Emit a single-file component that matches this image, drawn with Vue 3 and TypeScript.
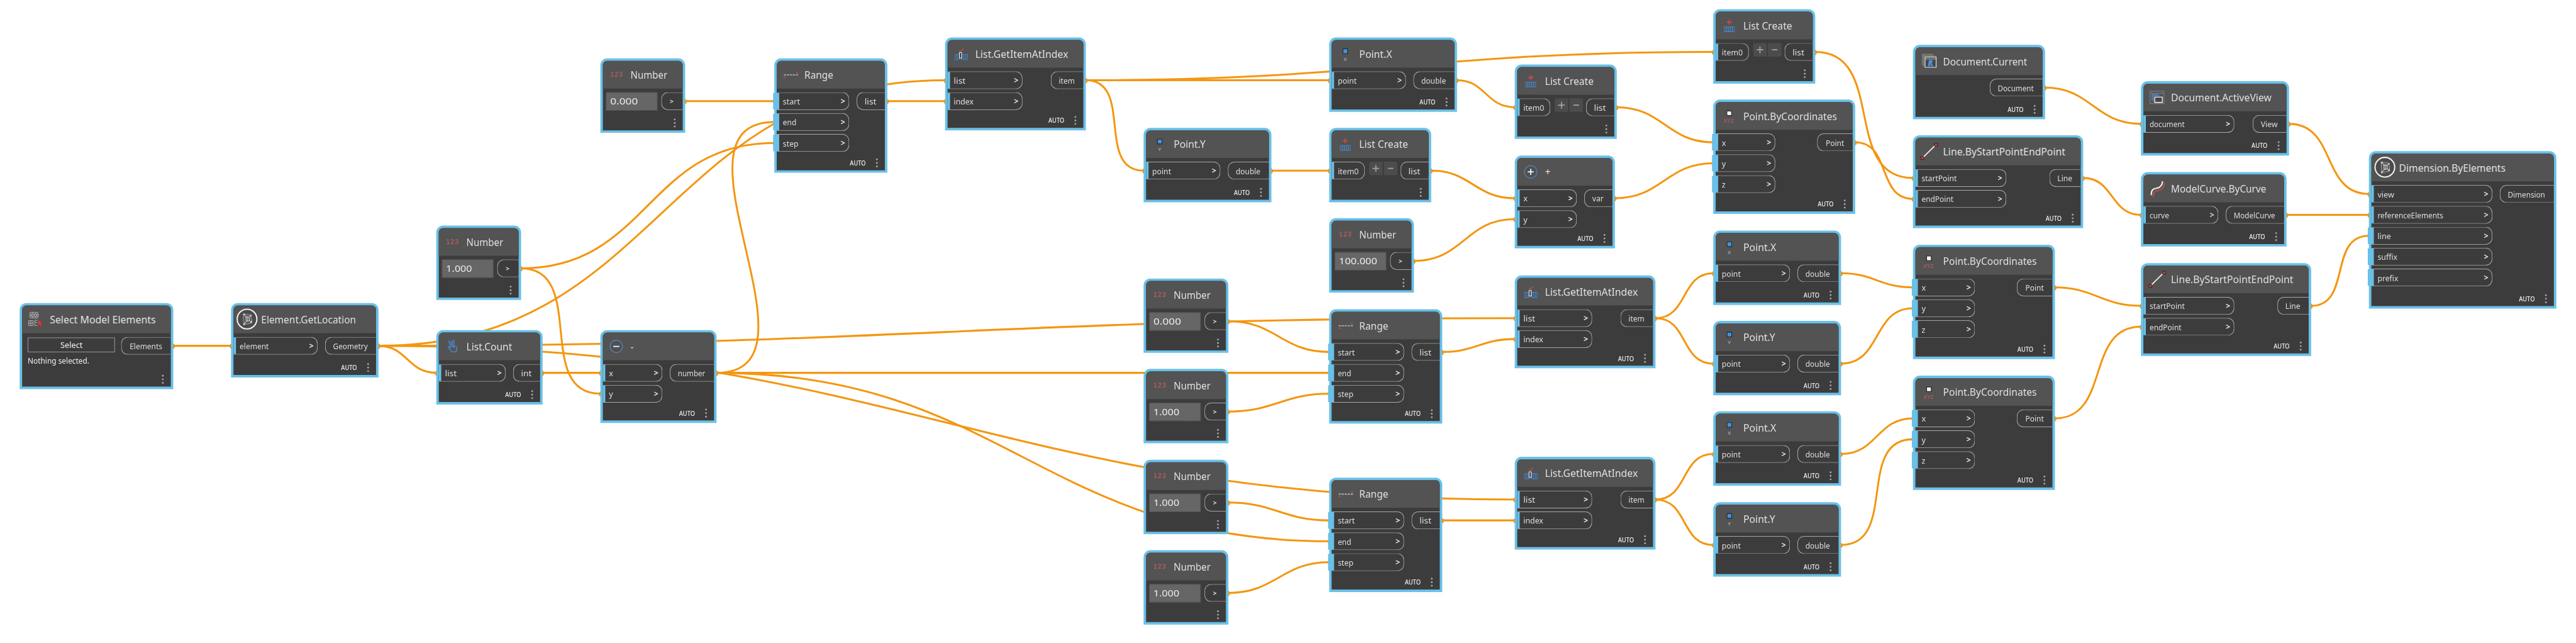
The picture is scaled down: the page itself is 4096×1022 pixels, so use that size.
<script setup lang="ts">
import type { Directive } from 'vue'

interface GraphNode {
  id: string
  title: string
  icon: string
  x: number
  y: number
  w: number
  h: number
  inputs: string[]
  inEnd: number
  output: string
  outStart: number
  auto: boolean
  value?: string
  wideFrom?: number
}

const SCALE = 4096 / 4192
const PORT_Y = 69.5
const PORT_STEP = 34

type Kind = Omit<GraphNode, 'id' | 'x' | 'y'>

const kinds: Record<string, Kind> = {
  select: { title: 'Select Model Elements', icon: 'select', w: 250, h: 140, inputs: [], inEnd: 0, output: 'Elements', outStart: 165, auto: false },
  location: { title: 'Element.GetLocation', icon: 'package', w: 240, h: 121, inputs: ['element'], inEnd: 141, output: 'Geometry', outStart: 153, auto: true },
  number: { title: 'Number', icon: 'number', w: 138, h: 121, inputs: [], inEnd: 0, output: '>', outStart: 99, auto: false },
  count: { title: 'List.Count', icon: 'count', w: 173, h: 121, inputs: ['list'], inEnd: 113, output: 'int', outStart: 125, auto: true },
  minus: { title: '-', icon: 'minus', w: 189, h: 151, inputs: ['x', 'y'], inEnd: 101, output: 'number', outStart: 113, auto: true },
  plus: { title: '+', icon: 'plus', w: 163, h: 151, inputs: ['x', 'y'], inEnd: 101, output: 'var', outStart: 113, auto: true },
  range: { title: 'Range', icon: 'range', w: 184, h: 186, inputs: ['start', 'end', 'step'], inEnd: 122, output: 'list', outStart: 134, auto: true, wideFrom: 0 },
  getItem: { title: 'List.GetItemAtIndex', icon: 'getItem', w: 229, h: 151, inputs: ['list', 'index'], inEnd: 126, output: 'item', outStart: 172, auto: true },
  pointX: { title: 'Point.X', icon: 'pointX', w: 208, h: 121, inputs: ['point'], inEnd: 125, output: 'double', outStart: 137, auto: true },
  pointY: { title: 'Point.Y', icon: 'pointY', w: 208, h: 121, inputs: ['point'], inEnd: 125, output: 'double', outStart: 137, auto: true },
  listCreate: { title: 'List Create', icon: 'listCreate', w: 166, h: 121, inputs: ['item0'], inEnd: 58, output: 'list', outStart: 116, auto: false },
  byCoords: { title: 'Point.ByCoordinates', icon: 'byCoords', w: 231, h: 186, inputs: ['x', 'y', 'z'], inEnd: 101, output: 'Point', outStart: 169, auto: true, wideFrom: 0 },
  docCurrent: { title: 'Document.Current', icon: 'docCurrent', w: 215, h: 121, inputs: [], inEnd: 0, output: 'Document', outStart: 125, auto: true },
  activeView: { title: 'Document.ActiveView', icon: 'activeView', w: 241, h: 121, inputs: ['document'], inEnd: 152, output: 'View', outStart: 182, auto: true },
  line: { title: 'Line.ByStartPointEndPoint', icon: 'line', w: 277, h: 151, inputs: ['startPoint', 'endPoint'], inEnd: 152, output: 'Line', outStart: 222, auto: true },
  modelCurve: { title: 'ModelCurve.ByCurve', icon: 'modelCurve', w: 237, h: 121, inputs: ['curve'], inEnd: 126, output: 'ModelCurve', outStart: 138, auto: true },
  dimension: { title: 'Dimension.ByElements', icon: 'package', w: 305, h: 256, inputs: ['view', 'referenceElements', 'line', 'suffix', 'prefix'], inEnd: 201, output: 'Dimension', outStart: 213, auto: true, wideFrom: 2 },
}

function place(id: string, kind: string, x: number, y: number, value?: string): GraphNode {
  return { id, x, y, value, ...kinds[kind] }
}

const nodes: GraphNode[] = [
  place('sel', 'select', 32, 493),
  place('loc', 'location', 376, 493),
  place('n1', 'number', 710, 367, '1.000'),
  place('cnt', 'count', 710, 537),
  place('sub', 'minus', 977, 537),
  place('n0', 'number', 977, 95, '0.000'),
  place('rng', 'range', 1260, 95),
  place('get', 'getItem', 1538, 61),
  place('py', 'pointY', 1861, 208),
  place('px', 'pointX', 2163, 61),
  place('lcY', 'listCreate', 2163, 208),
  place('n100', 'number', 2163, 355, '100.000'),
  place('m0', 'number', 1861, 453, '0.000'),
  place('m1', 'number', 1861, 600, '1.000'),
  place('k1', 'number', 1861, 748, '1.000'),
  place('k2', 'number', 1861, 895, '1.000'),
  place('rngB', 'range', 2163, 503),
  place('rngC', 'range', 2163, 777),
  place('lcX', 'listCreate', 2465, 105),
  place('add', 'plus', 2465, 253),
  place('getB', 'getItem', 2465, 448),
  place('getC', 'getItem', 2465, 743),
  place('lcTop', 'listCreate', 2788, 15),
  place('pbc', 'byCoords', 2788, 162),
  place('pxB', 'pointX', 2788, 375),
  place('pyB', 'pointY', 2788, 522),
  place('pxC', 'pointX', 2788, 669),
  place('pyC', 'pointY', 2788, 817),
  place('doc', 'docCurrent', 3113, 73),
  place('lineA', 'line', 3113, 220),
  place('pbcB', 'byCoords', 3113, 398),
  place('pbcC', 'byCoords', 3113, 611),
  place('view', 'activeView', 3484, 132),
  place('curve', 'modelCurve', 3484, 280),
  place('lineB', 'line', 3484, 428),
  place('dim', 'dimension', 3855, 246),
]

const links: [string, string, number][] = [
  ['sel', 'loc', 0],
  ['loc', 'cnt', 0],
  ['loc', 'get', 0],
  ['loc', 'getB', 0],
  ['loc', 'getC', 0],
  ['cnt', 'sub', 0],
  ['n1', 'sub', 1],
  ['n1', 'rng', 2],
  ['sub', 'rng', 1],
  ['sub', 'rngB', 1],
  ['sub', 'rngC', 1],
  ['n0', 'rng', 0],
  ['rng', 'get', 1],
  ['get', 'lcTop', 0],
  ['get', 'px', 0],
  ['get', 'py', 0],
  ['px', 'lcX', 0],
  ['py', 'lcY', 0],
  ['lcY', 'add', 0],
  ['n100', 'add', 1],
  ['lcX', 'pbc', 0],
  ['add', 'pbc', 1],
  ['lcTop', 'lineA', 0],
  ['pbc', 'lineA', 1],
  ['m0', 'rngB', 0],
  ['m1', 'rngB', 2],
  ['rngB', 'getB', 1],
  ['k1', 'rngC', 0],
  ['k2', 'rngC', 2],
  ['rngC', 'getC', 1],
  ['getB', 'pxB', 0],
  ['getB', 'pyB', 0],
  ['getC', 'pxC', 0],
  ['getC', 'pyC', 0],
  ['pxB', 'pbcB', 0],
  ['pyB', 'pbcB', 1],
  ['pxC', 'pbcC', 0],
  ['pyC', 'pbcC', 1],
  ['pbcB', 'lineB', 0],
  ['pbcC', 'lineB', 1],
  ['doc', 'view', 0],
  ['lineA', 'curve', 0],
  ['view', 'dim', 0],
  ['curve', 'dim', 1],
  ['lineB', 'dim', 2],
]

const byId = Object.fromEntries(nodes.map((n) => [n.id, n]))

const wires = links.map(([from, to, port]) => {
  const a = byId[from]
  const b = byId[to]
  const x0 = a.x + a.w
  const y0 = a.y + PORT_Y
  const x3 = b.x
  const y3 = b.y + PORT_Y + port * PORT_STEP
  const offset = 0.45 * Math.hypot(x3 - x0, y3 - y0)
  return { x0, y0, x3, y3, d: `M${x0} ${y0}C${x0 + offset} ${y0} ${x3 - offset} ${y3} ${x3} ${y3}` }
})

/* Rendered widths of the labels, in canvas units. */
const titleWidths: Record<string, number> = {
  'Select Model Elements': 171, 'Element.GetLocation': 153, Number: 58.6, 'List.Count': 73, Range: 45.7,
  'List.GetItemAtIndex': 150, 'Point.X': 52, 'Point.Y': 50.5, 'List Create': 78, 'Point.ByCoordinates': 151,
  'Document.Current': 135.5, 'Document.ActiveView': 162, 'Line.ByStartPointEndPoint': 197.5,
  'ModelCurve.ByCurve': 153.5, 'Dimension.ByElements': 172,
}
const labelWidths: Record<string, number> = {
  Elements: 51.6, Geometry: 55, element: 46, list: 17.9, int: 16, number: 43.2, start: 26.4, end: 20.5, step: 24,
  item: 24.5, index: 31, point: 29.3, double: 38.6, item0: 32.5, var: 17.3, Point: 28.6, Document: 57,
  document: 55.6, View: 26, curve: 30.5, ModelCurve: 66, startPoint: 56, endPoint: 50.5, Line: 23, view: 25.7,
  referenceElements: 105.7, line: 20.5, suffix: 31, prefix: 32.3, Dimension: 59.3,
}
const valueWidths: Record<string, number> = { '0.000': 43.6, '1.000': 40.7, '100.000': 60.7 }

const vFit: Directive<HTMLElement, number | undefined> = {
  mounted(el, { value }) {
    if (!value) return
    const target = value + 1.4
    const natural = el.getBoundingClientRect().width / SCALE
    el.style.width = `${target}px`
    el.style.transform = `scaleX(${target / natural})`
  },
}
</script>

<template>
  <main class="viewport">
    <div class="canvas" :style="{ transform: `scale(${SCALE})` }">
      <svg class="wires" width="4192" height="1046" viewBox="0 0 4192 1046">
        <g v-for="(wire, i) in wires" :key="i">
          <path :d="wire.d" fill="none" stroke="#f4960f" stroke-width="3.1" />
          <circle :cx="wire.x0 - 1.8" :cy="wire.y0 + 0.7" r="4.6" fill="#f4960f" />
          <circle :cx="wire.x3 + 2.2" :cy="wire.y3 + 0.7" r="4.6" fill="#f4960f" />
        </g>
      </svg>

      <section
        v-for="node in nodes"
        :key="node.id"
        class="node"
        :style="{ left: `${node.x}px`, top: `${node.y}px`, width: `${node.w}px`, height: `${node.h}px` }"
      >
        <header class="head">
          <svg class="icon" width="45" height="45" viewBox="4 4 45 45" fill="none">
            <template v-if="node.icon === 'select'">
              <path d="M17 15h12.500v3.200H17zM16.500 18.200h14v3H16.500zM17 21.200h12.500v3H17zM21 15v3.200M25.500 15v3.200M19.500 18.200v3M23.500 18.200v3M27.500 18.200v3M21 21.200v3M25.500 21.200v3" stroke="#b5b5b5" stroke-width="1" />
              <path d="M14.700 28.500h7v8h-7zM18.200 28.500v8M14.700 32.500h7M31 28h-6.300v8.500H30M25 31.500h4" stroke="#b5b5b5" stroke-width="1" />
              <path d="M29.500 26.500v11l2.700-2.300 2 4 2.300-1-2-4 3.800-.6z" fill="#c8423f" stroke="#6a3a3a" stroke-width=".6" />
            </template>
            <template v-else-if="node.icon === 'package'">
              <circle cx="26" cy="26" r="16" fill="#4b4b4b" stroke="#efefef" stroke-width="2.100" />
              <path d="M20.500 17.500l12 2.500.8 11.500L21 35.300z" stroke="#b9b9b9" stroke-width="1.900" stroke-linejoin="round" />
              <path d="M21 17.500h2l10 3v2.500l-1.500 8.500-9.500 4-1-1z" stroke="#2b2b2b" stroke-width=".8" />
              <path d="M24.300 22.200l5.200.6.400 6-5.200 1z" stroke="#d8d8d8" stroke-width="1.300" />
              <path d="M20.500 18l4 4.500M32.500 20.200l-3 2.600M33.200 31.300l-3.300-2.600M21 35l3.700-5.200M27 23v6.200" stroke="#e2e2e2" stroke-width="1" />
              <circle cx="21.300" cy="18.500" r="1.300" fill="#ddd" /><circle cx="32.300" cy="20.400" r="1.200" fill="#ddd" />
              <circle cx="21.300" cy="34" r="1.300" fill="#ddd" /><circle cx="32.500" cy="31" r="1.200" fill="#ddd" />
            </template>
            <text v-else-if="node.icon === 'number'" class="glyph" x="16.200" y="30.200" font-size="10.300" textLength="20" fill="#b05c5c">123</text>
            <path
              v-else-if="node.icon === 'count'"
              d="M23.500 26.500l-3-6.700c-.5-1.600 1.500-2.500 2.400-1l3 6.200.6-7.200c.3-1.800 2.700-1.500 2.600.3l-.3 8.200c2-.4 4.300.4 4.700 1.600v3.500c-.3 1.800-1.500 2.600-1.700 3.900H25c-.5-2.300-3.600-4.400-5.300-6.400-1.400-1.700.2-2.900 1.700-1.900l2.600 1.900-.8-2.600M26 26.600c.6-1.200 2.300-.9 2.500.3v2.200M28.800 26.500v2.600"
              stroke="#4a8fd6" stroke-width="1.300" stroke-linejoin="round" stroke-linecap="round"
            />
            <template v-else-if="node.icon === 'minus' || node.icon === 'plus'">
              <circle cx="26" cy="26.500" r="10.200" fill="#4e5154" stroke="#5788ba" stroke-width="1.200" />
              <path d="M21 26.500h10" stroke="#f5f5f5" stroke-width="1.900" />
              <path v-if="node.icon === 'plus'" d="M26 21.500v10" stroke="#f5f5f5" stroke-width="1.900" />
            </template>
            <template v-else-if="node.icon === 'range'">
              <path d="M15.500 26.800H39" stroke="#b9b9b9" stroke-width="1.600" stroke-dasharray="3.600 1.300" />
              <path d="M14.800 31.700h4.200l-2.100-3zM35 22.300h4.200l-2.100 3z" fill="#b8504e" />
            </template>
            <template v-else-if="node.icon === 'getItem'">
              <path d="M16.500 27.500h6.500v8.500h-6.500zM19.700 27.500V36M27.500 27.500h9V36h-9zM30.500 27.500V36M33.500 27.500V36" stroke="#3f83c6" stroke-width="1.200" />
              <path d="M23.300 24.500h3.500v9h-3.500z" fill="#3c3c3c" stroke="#f0f0f0" stroke-width="1.100" />
              <path d="M23 20.800l2.200 2.200 4.800-5" stroke="#b8504e" stroke-width="1.500" />
            </template>
            <template v-else-if="node.icon === 'pointX' || node.icon === 'pointY'">
              <path d="M22.500 18.500h7.500v7.500h-7.500z" fill="#4592dc" stroke="#222c36" stroke-width="1.200" />
              <text class="glyph letter" x="26.200" y="38" font-size="8.300" text-anchor="middle" fill="#c4c4c4">{{ node.icon === 'pointX' ? 'X' : 'Y' }}</text>
            </template>
            <template v-else-if="node.icon === 'listCreate'">
              <path d="M26 17v8.200M21.900 21.100h8.200" stroke="#cc4a47" stroke-width="1.900" />
              <path d="M18 28.700h16.200v7.800H18z" stroke="#3f83c6" stroke-width="1.200" />
              <path d="M21.300 29v7.500M24.500 29v7.500M27.700 29v7.500M30.900 29v7.500" stroke="#4a8fd6" stroke-width="1.200" />
            </template>
            <template v-else-if="node.icon === 'byCoords'">
              <path d="M22.200 18.500h7.600V26h-7.600z" fill="#f2f2f2" stroke="#2a2a2a" stroke-width="1.200" />
              <text class="glyph" x="17" y="38" font-size="8.800" textLength="16.500" lengthAdjust="spacingAndGlyphs" fill="#ad5a5a">XYZ</text>
            </template>
            <template v-else-if="node.icon === 'docCurrent'">
              <path d="M15.500 33V15.500h17M17.500 35.500V17.500H36" stroke="#767676" stroke-width="2" />
              <path d="M19.700 19.700h18v16.800h-18z" fill="#474747" stroke="#e8e8e8" stroke-width="1.200" />
              <path d="M19.700 23h18" stroke="#c8c8c8" stroke-width="1" />
              <path d="M24.300 35l1.400-9.300c1.300-1.800 6.500-1.800 6.300 1.300 0 1.500-.7 2.600-1.600 3.100l2.700 4.700-2.900.2-2.100-3.400-.6 3.400z" fill="#4592dc" />
            </template>
            <template v-else-if="node.icon === 'activeView'">
              <path d="M14.700 16.200h23v20.300h-23zM14.700 19.800h23" stroke="#7c7c7c" stroke-width="1.200" />
              <path d="M18 31v-9.200h10.500M20 33v-9.200h10.500" stroke="#4a8fd6" stroke-width="1.300" />
              <path d="M22.500 26h12.300v8.600H22.500z" fill="#474747" stroke="#f0f0f0" stroke-width="1.400" />
            </template>
            <template v-else-if="node.icon === 'line'">
              <path d="M15.500 37L37.500 15.300" stroke="#ececec" stroke-width="1.900" />
              <path d="M13 35h4.600v4.600H13zM35.300 13h4.600v4.600h-4.600z" fill="#d2403c" stroke="#2e1c1c" stroke-width="1" />
            </template>
            <template v-else-if="node.icon === 'modelCurve'">
              <path d="M20 40.500c0-9 3-10 8.500-10.800C35 28.500 37.500 25 38.300 17.500" stroke="#c24f4c" stroke-width="2" />
              <path d="M16.800 37.500c0-9 3-10.500 8.500-11.200 6.500-1.300 9.300-4.300 9.900-11.500" stroke="#f2f2f2" stroke-width="2.200" />
            </template>
          </svg>
          <h2 class="title"><span v-fit="titleWidths[node.title]" class="text">{{ node.title }}</span></h2>
        </header>

        <div class="body">
          <div v-if="node.icon === 'select'" class="picker">
            <button class="pick"><span v-fit="35" class="text">Select</span></button>
            <p class="status"><span v-fit="99" class="text">Nothing selected.</span></p>
          </div>
          <div v-if="node.value" class="field"><span v-fit="valueWidths[node.value]" class="text">{{ node.value }}</span></div>
          <div v-if="node.inputs.length" class="inputs" :style="{ width: `${node.inEnd - 4}px` }">
            <div v-for="(label, i) in node.inputs" :key="label" class="port in">
              <i class="marker" :class="{ wide: node.wideFrom !== undefined && i >= node.wideFrom }"></i>
              <span v-fit="labelWidths[label]" class="text">{{ label }}</span>
              <svg v-if="node.icon !== 'listCreate'" class="chevron" width="7" height="7" viewBox="0 0 7 7"><path d="M.5 .6L6.200 3.500.5 6.400" fill="none" stroke="#e2e2e2" stroke-width="1.400" /></svg>
            </div>
          </div>
          <div v-if="node.icon === 'listCreate'" class="steppers">
            <button class="step first"><svg width="12" height="12" viewBox="0 0 12 12"><path d="M6 .5v11M.5 6h11" stroke="#a3a3a3" stroke-width="1.800" /></svg></button>
            <button class="step last"><svg width="12" height="12" viewBox="0 0 12 12"><path d="M1.500 6h9" stroke="#a3a3a3" stroke-width="1.800" /></svg></button>
          </div>
          <div class="port out" :style="{ width: `${node.w - 4 - node.outStart}px` }">
            <svg v-if="node.output === '>'" width="6" height="6" viewBox="0 0 6 6"><path d="M.4 .7L5 3 .4 5.300" fill="none" stroke="#dedede" stroke-width="1.200" /></svg>
            <span v-else v-fit="labelWidths[node.output]" class="text">{{ node.output }}</span>
          </div>
        </div>

        <footer class="foot">
          <span v-if="node.auto" v-fit="24.500" class="text auto">AUTO</span>
          <svg class="dots" width="4" height="16" viewBox="0 0 4 16" fill="#a6a6a6">
            <circle cx="2" cy="2.300" r="1.500" /><circle cx="2" cy="8" r="1.500" /><circle cx="2" cy="13.700" r="1.500" />
          </svg>
        </footer>
      </section>
    </div>
  </main>
</template>

<style>
body {
  margin: 0;
  background: #fff;
}
</style>

<style scoped>
.viewport {
  width: 4096px;
  height: 1022px;
  overflow: hidden;
  background: #fff;
}
.canvas {
  position: relative;
  width: 4192px;
  height: 1046px;
  transform-origin: 0 0;
  font-family: 'Noto Sans', 'Open Sans', sans-serif;
  font-size: 13px;
  color: #dedede;
}
.wires {
  display: block;
}
.node {
  position: absolute;
  box-sizing: border-box;
  display: flex;
  flex-direction: column;
  border: 4px solid #6ac0e7;
  border-radius: 11px 11px 0 0;
  background: #3c3c3c;
  box-shadow: 0 5px 8px rgba(0, 0, 0, 0.015);
}
.head {
  display: flex;
  align-items: center;
  flex: none;
  height: 45px;
  background: #535353;
  border-radius: 7px 7px 0 0;
}
.icon {
  flex: none;
}
.glyph {
  font-family: 'Liberation Sans', sans-serif;
  font-weight: 700;
}
.letter {
  font-weight: 400;
}
.title {
  margin: 1px 0 0;
  font-size: 16.5px;
  line-height: 24px;
  font-weight: 400;
  color: #e0e0e0;
}
.text {
  display: inline-block;
  flex: none;
  white-space: nowrap;
  transform-origin: 0 50%;
}
.body {
  display: flex;
  flex: 1;
  align-items: flex-start;
  padding-top: 6px;
}
.inputs {
  display: flex;
  flex-direction: column;
  gap: 5px;
}
.port {
  position: relative;
  box-sizing: border-box;
  display: flex;
  align-items: center;
  height: 29px;
  line-height: 20px;
  border: 1px solid #a8a8a8;
}
.in {
  padding: 0 6px 0 10px;
  border-left: 0;
  border-radius: 0 11px 11px 0;
}
.out {
  flex: none;
  margin-left: auto;
  justify-content: center;
  padding-right: 2px;
  border-right: 0;
  border-radius: 11px 0 0 11px;
}
.marker {
  position: absolute;
  left: 0;
  top: 0;
  width: 4px;
  height: 27px;
  background: #6ac0e7;
}
.marker.wide {
  left: -6px;
  width: 10px;
}
.chevron {
  margin-left: auto;
}
.field {
  box-sizing: border-box;
  width: 84px;
  height: 30px;
  margin-left: 5px;
  padding-left: 6px;
  border: 1px solid #515151;
  background: #666;
  color: #ececec;
  font-size: 15.6px;
  line-height: 27px;
}
.picker {
  margin: 1px 0 0 9px;
}
.pick {
  box-sizing: border-box;
  display: flex;
  align-items: center;
  justify-content: center;
  width: 142px;
  height: 24px;
  padding: 0 0 1px;
  border: 1px solid #9a9a9a;
  background: transparent;
  color: #f2f2f2;
  font: inherit;
}
.status {
  margin: 5px 0 0;
  line-height: 18px;
  font-size: 13.3px;
  color: #f0f0f0;
}
.steppers {
  display: flex;
  gap: 2px;
  margin-left: 6.5px;
}
.step {
  display: flex;
  align-items: center;
  justify-content: center;
  width: 22px;
  height: 22px;
  padding: 0;
  border: 0;
  background: #4c4c4c;
}
.first {
  border-radius: 3px 0 0 3px;
}
.last {
  border-radius: 0 3px 3px 0;
}
.foot {
  display: flex;
  flex: none;
  align-items: center;
  justify-content: flex-end;
  height: 25px;
  padding-right: 11px;
}
.auto {
  margin-right: 16px;
  font-size: 10.6px;
  font-weight: 500;
  line-height: 14px;
  color: #efefef;
}
</style>
